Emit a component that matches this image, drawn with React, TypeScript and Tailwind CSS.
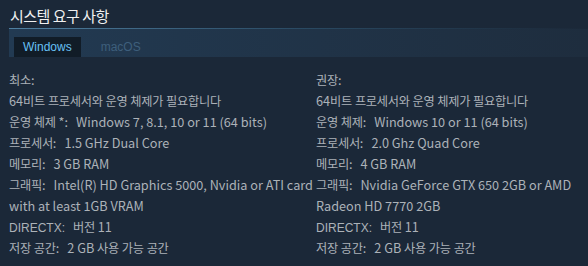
import React from "react";

const kr = { fontFamily: '"Noto Sans CJK KR", "Noto Sans", sans-serif' };
const ar = { fontFamily: '"Liberation Sans", Arial, "Noto Sans CJK KR", sans-serif' };

function Txt({ s }: { s: string }) {
  const parts = s.split(/([가-힣]+)/).filter((p) => p.length > 0);
  return (
    <>
      {parts.map((p, i) =>
        /[가-힣]/.test(p) ? (
          <span key={i} className="text-[12.2px] leading-none tracking-[-0.25px]">
            {p}
          </span>
        ) : (
          <span key={i}>{p}</span>
        )
      )}
    </>
  );
}

type Row = { label: string; value: string; labelArial?: boolean };

const left: Row[] = [
  { label: "운영 체제 *:", value: "Windows 7, 8.1, 10 or 11 (64 bits)" },
  { label: "프로세서:", value: "1.5 GHz Dual Core" },
  { label: "메모리:", value: "3 GB RAM" },
  { label: "그래픽:", value: "Intel(R) HD Graphics 5000, Nvidia or ATI card with at least 1GB VRAM" },
  { label: "DIRECTX:", value: "버전 11", labelArial: true },
  { label: "저장 공간:", value: "2 GB 사용 가능 공간" },
];
const right: Row[] = [
  { label: "운영 체제:", value: "Windows 10 or 11 (64 bits)" },
  { label: "프로세서:", value: "2.0 Ghz Quad Core" },
  { label: "메모리:", value: "4 GB RAM" },
  { label: "그래픽:", value: "Nvidia GeForce GTX 650 2GB or AMD Radeon HD 7770 2GB" },
  { label: "DIRECTX:", value: "버전 11", labelArial: true },
  { label: "저장 공간:", value: "2 GB 사용 가능 공간" },
];

function Col({ title, rows }: { title: string; rows: Row[] }) {
  return (
    <div className="flex flex-col text-[12.7px] leading-[21px] text-[#acb2b8]" style={kr}>
      <div>
        <Txt s={title} />
      </div>
      <div>
        <Txt s="64비트 프로세서와 운영 체제가 필요합니다" />
      </div>
      {rows.map((r, i) => (
        <div key={i}>
          {r.labelArial ? (
            <span className="text-[12px] leading-none" style={ar}>
              {r.label}
            </span>
          ) : (
            <Txt s={r.label} />
          )}
          <span className="ml-[8px]">
            <Txt s={r.value} />
          </span>
        </div>
      ))}
    </div>
  );
}

export default function App() {
  return (
    <div className="w-[588px] h-[266px] bg-[#1b2838] overflow-hidden">
      <div className="pl-[10px] pt-[6px] text-[15px] leading-[20px] tracking-[-0.5px] text-[#f0f0f0]" style={kr}>
        시스템 요구 사항
      </div>
      <div
        className="ml-[9px] mt-[2px] h-[29px] border-t border-[#3d6c8d] bg-gradient-to-r from-[#223a52] to-[#1e2d3e] flex items-end pl-[5px]"
        style={{ borderImage: "linear-gradient(to right, #4f7fa0, #2a4a63, #1b2838) 1" }}
      >
        <div className="h-[20px] px-[9px] bg-[#111c27] text-[#67c1f5] text-[12px] leading-[20px]" style={ar}>
          Windows
        </div>
        <div className="h-[20px] pl-[20px] text-[#3e5f7c] text-[12px] leading-[20px]" style={ar}>
          macOS
        </div>
      </div>
      <div className="grid grid-cols-[307px_262px] pl-[9px] pt-[12px]">
        <Col title="최소:" rows={left} />
        <Col title="권장:" rows={right} />
      </div>
    </div>
  );
}
